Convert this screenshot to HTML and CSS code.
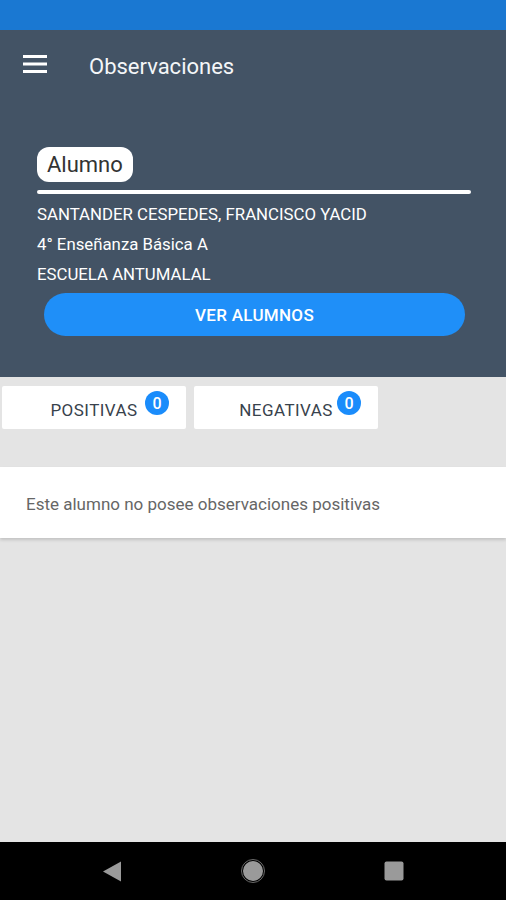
FILE: index.html
```html
<!DOCTYPE html>
<html lang="es">
<head>
<meta charset="utf-8">
<title>Observaciones</title>
<link rel="stylesheet" href="styles.css">
</head>
<body>
<div class="screen">
  <div class="statusbar"></div>
  <header class="header">
    <div class="appbar">
      <svg class="menu" width="24" height="18" viewBox="0 0 24 18">
        <rect x="0" y="0" width="24" height="3" fill="#fff"/>
        <rect x="0" y="7.5" width="24" height="3" fill="#fff"/>
        <rect x="0" y="15" width="24" height="3" fill="#fff"/>
      </svg>
      <h1 class="title">Observaciones</h1>
    </div>
    <section class="student">
      <div class="pill">Alumno</div>
      <div class="rule"></div>
      <p class="info">SANTANDER CESPEDES, FRANCISCO YACID</p>
      <p class="info">4° Enseñanza Básica A</p>
      <p class="info">ESCUELA ANTUMALAL</p>
      <button class="btn">VER ALUMNOS</button>
    </section>
  </header>
  <main class="main">
    <nav class="tabs">
      <div class="tab">POSITIVAS<span class="badge">0</span></div>
      <div class="tab">NEGATIVAS<span class="badge">0</span></div>
    </nav>
    <div class="card">Este alumno no posee observaciones positivas</div>
  </main>
  <footer class="navbar">
    <svg width="20" height="21" viewBox="0 0 20 21"><path d="M19 0.5 L19 20.5 L1 10.5 Z" fill="#9a9a9a"/></svg>
    <svg width="26" height="26" viewBox="0 0 26 26"><circle cx="13" cy="13" r="10" fill="#9a9a9a"/><circle cx="13" cy="13" r="11.5" fill="none" stroke="#6a6a6a" stroke-width="1"/></svg>
    <svg width="20" height="20" viewBox="0 0 20 20"><rect x="0.5" y="0.5" width="19" height="19" rx="2" fill="#9a9a9a"/></svg>
  </footer>
</div>
</body>
</html>
```
FILE: styles.css
```css
* { box-sizing: border-box; }
html, body { margin: 0; padding: 0; }
body {
  font-family: Roboto, "Noto Sans", "Liberation Sans", sans-serif;
  background: #e4e4e4;
}
.screen {
  width: 506px;
  height: 900px;
  display: flex;
  flex-direction: column;
  overflow: hidden;
}
.statusbar {
  height: 30px;
  background: #1a78d2;
  flex: none;
}
.header {
  background: #435365;
  flex: none;
  padding-bottom: 41px;
}
.appbar {
  height: 72px;
  display: flex;
  align-items: center;
  padding-left: 23px;
}
.menu { margin-top: -4px; }
.title {
  margin: 0 0 0 42px;
  font-size: 22px;
  font-weight: 400;
  color: #f4f6f8;
}
.student {
  padding: 45px 35px 0 37px;
}
.pill {
  display: inline-block;
  background: #fff;
  color: #333;
  font-size: 22px;
  line-height: 35px;
  height: 35px;
  padding: 0 10px;
  border-radius: 12px;
}
.rule {
  margin-top: 8px;
  width: 434px;
  height: 4px;
  border-radius: 2px;
  background: #fff;
}
.info {
  margin: 0;
  color: #fff;
  font-size: 16.8px;
  line-height: 30px;
}
.rule + .info { margin-top: 5px; }
.btn {
  display: block;
  margin: 4px 0 0 7px;
  width: 421px;
  height: 43px;
  border: 0;
  border-radius: 22px;
  background: #1f8ff8;
  color: #fff;
  font-family: inherit;
  font-size: 17px;
  font-weight: 500;
  letter-spacing: 0.3px;
}
.main {
  flex: 1;
  background: #e4e4e4;
}
.tabs {
  display: flex;
  gap: 8px;
  padding: 9px 0 0 2px;
}
.tab {
  position: relative;
  width: 184px;
  height: 43px;
  background: #fff;
  border-radius: 2px;
  display: flex;
  align-items: center;
  justify-content: center;
  padding-top: 5px;
  font-size: 17px;
  color: #38424c;
  letter-spacing: 0.45px;
}
.badge {
  position: absolute;
  right: 17px;
  top: 5px;
  width: 24px;
  height: 24px;
  border-radius: 50%;
  background: #1a8cfb;
  color: #fff;
  font-size: 16px;
  font-weight: 500;
  letter-spacing: 0;
  display: flex;
  align-items: center;
  justify-content: center;
}
.card {
  margin-top: 38px;
  height: 71px;
  background: #fff;
  display: flex;
  align-items: center;
  padding: 2px 0 0 26px;
  font-size: 17px;
  color: #666;
  box-shadow: 0 2px 3px rgba(0,0,0,0.15);
}
.navbar {
  flex: none;
  height: 58px;
  background: #000;
  display: flex;
  align-items: center;
  padding-left: 102px;
  gap: 118px;
}
```
